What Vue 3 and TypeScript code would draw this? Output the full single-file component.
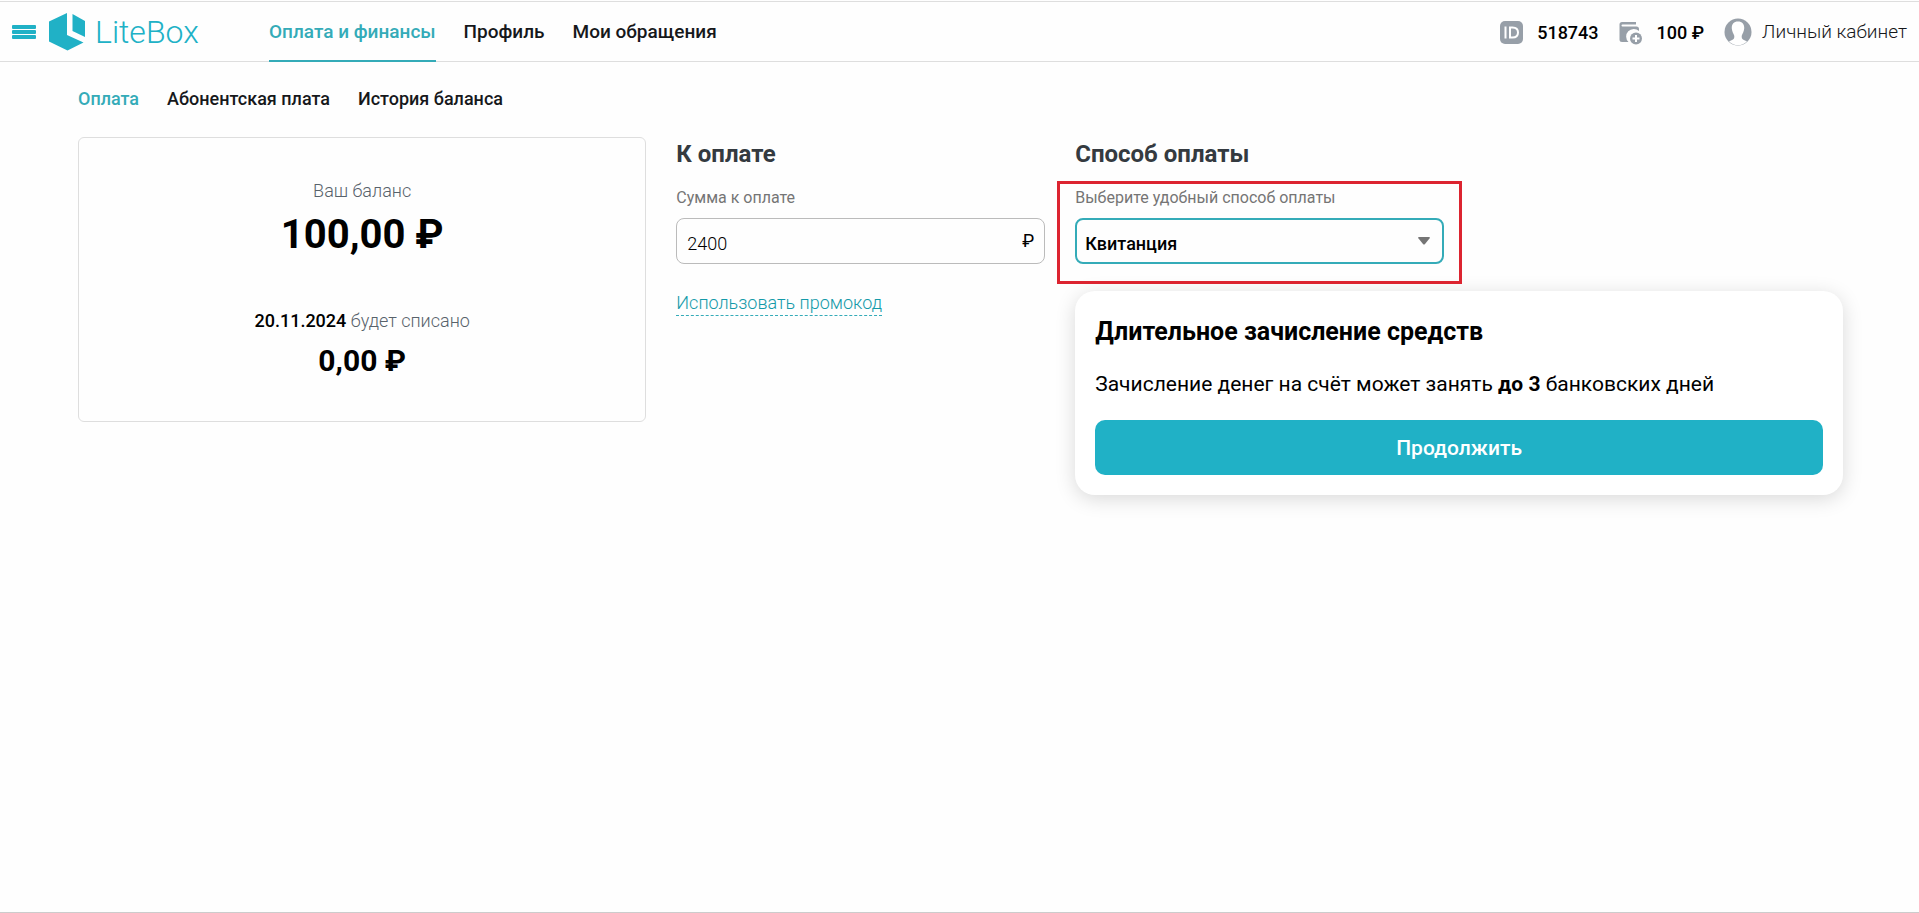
<script setup lang="ts">
import { ref } from 'vue'

interface NavLink {
  label: string
  active: boolean
}

const sections: NavLink[] = [
  { label: 'Оплата и финансы', active: true },
  { label: 'Профиль', active: false },
  { label: 'Мои обращения', active: false },
]

const tabs: NavLink[] = [
  { label: 'Оплата', active: true },
  { label: 'Абонентская плата', active: false },
  { label: 'История баланса', active: false },
]

const amount = ref('2400')
const method = ref('Квитанция')
</script>

<template>
  <div class="page">
    <header class="header">
      <button class="burger" type="button" aria-label="Меню">
        <svg width="24" height="14" viewBox="0 0 24 14" fill="currentColor">
          <rect width="24" height="4" rx="1" />
          <rect y="5" width="24" height="4" rx="1" />
          <rect y="10" width="24" height="4" rx="1" />
        </svg>
      </button>
      <a class="logo" href="#">
        <svg width="36" height="38" viewBox="0 0 36 38" fill="currentColor">
          <path d="M0 8.500L18 0V22L34.500 29.500L18.500 37.500L0 28.500Z" />
          <path d="M23.500 1L36 8V24L23.500 18Z" />
        </svg>
        <span class="logo-name">LiteBox</span>
      </a>
      <nav class="sections">
        <a
          v-for="item in sections"
          :key="item.label"
          href="#"
          class="section"
          :class="{ active: item.active }"
        >{{ item.label }}</a>
      </nav>
      <div class="account">
        <svg class="account-icon" width="23" height="23" viewBox="0 0 23 23">
          <rect width="23" height="23" rx="5" fill="#979fa8" />
          <path d="M5.500 5.500V17.500M10 6.500V16.500H12.500C16 16.500 18 15 18 11.500S16 6.500 12.500 6.500Z" fill="none" stroke="#fff" stroke-width="2" />
        </svg>
        <span class="account-value">518743</span>
        <svg class="account-icon" width="24" height="24" viewBox="0 0 24 24">
          <path d="M3 1H17V3.500H3.500A1 1 0 0 0 3.500 5.500H17.500A2.500 2.500 0 0 1 20 8V10A7 7 0 0 0 9.500 21H3A2.500 2.500 0 0 1 0.500 18.500V3.500A2.500 2.500 0 0 1 3 1Z" fill="#979fa8" />
          <circle cx="17" cy="17.500" r="6" fill="#979fa8" />
          <path d="M17 14V21M13.500 17.500H20.500" stroke="#fff" stroke-width="2" />
        </svg>
        <span class="account-value">100 ₽</span>
        <a class="cabinet" href="#">
          <svg width="28" height="28" viewBox="0 0 28 28">
            <circle cx="14" cy="14" r="13.500" fill="#979fa8" />
            <path d="M14 3.500C18.500 3.500 20.500 6.500 20.200 10.500C20 13.500 18.500 15.500 17.800 17.500C17.400 20 18 21.500 21 22.500L23 23.500A12.800 12.800 0 0 1 5 23.500L7 22.500C10 21.500 10.600 20 10.200 17.500C9.500 15.500 8 13.500 7.800 10.500C7.500 6.500 9.500 3.500 14 3.500Z" fill="#fff" />
          </svg>
          <span>Личный кабинет</span>
        </a>
      </div>
    </header>

    <main class="content">
      <nav class="tabs">
        <a
          v-for="tab in tabs"
          :key="tab.label"
          href="#"
          class="tab"
          :class="{ active: tab.active }"
        >{{ tab.label }}</a>
      </nav>

      <div class="columns">
        <section class="balance">
          <p class="balance-label">Ваш баланс</p>
          <p class="balance-total">100,00 ₽</p>
          <p class="balance-label"><b>20.11.2024</b> будет списано</p>
          <p class="balance-charge">0,00 ₽</p>
        </section>

        <div class="payment">
          <section class="amount">
            <h2 class="title">К оплате</h2>
            <label class="label" for="amount">Сумма к оплате</label>
            <div class="field">
              <input id="amount" v-model="amount" type="text" class="input" />
              <span class="currency">₽</span>
            </div>
            <button type="button" class="promo">Использовать промокод</button>
          </section>

          <section class="method">
            <h2 class="title">Способ оплаты</h2>
            <div class="method-choice">
              <label class="label" for="method">Выберите удобный способ оплаты</label>
              <div class="field focused">
                <select id="method" v-model="method" class="select">
                  <option>Квитанция</option>
                </select>
                <svg class="arrow" width="12" height="8" viewBox="0 0 12 8">
                  <path d="M1 0H11Q12.500 0 11.500 1.500L7 7Q6 8 5 7L0.500 1.500Q-0.500 0 1 0Z" fill="#757575" />
                </svg>
              </div>
              <div class="highlight"></div>
            </div>
            <div class="notice">
              <h3 class="notice-title">Длительное зачисление средств</h3>
              <p class="notice-text">Зачисление денег на счёт может занять <b>до 3</b> банковских дней</p>
              <button type="button" class="submit">Продолжить</button>
            </div>
          </section>
        </div>
      </div>
    </main>
  </div>
</template>

<style>
body {
  margin: 0;
  background: #fefefe;
}
</style>

<style scoped>
.page {
  box-sizing: border-box;
  min-height: 100vh;
  padding-top: 1px;
  border-bottom: 1px solid #ccc;
  font-family: Roboto, "Liberation Sans", sans-serif;
  font-size: 18px;
  line-height: 24px;
  color: #000;
}

.page * {
  box-sizing: border-box;
}

p,
h2,
h3 {
  margin: 0;
}

a {
  text-decoration: none;
}

button,
input,
select {
  font-family: inherit;
}

.header {
  display: flex;
  align-items: center;
  height: 61px;
  padding: 0 12px;
  border-top: 1px solid #dedede;
  border-bottom: 1px solid #dedede;
  font-size: 19px;
}

.burger {
  display: flex;
  padding: 0;
  border: 0;
  background: none;
  color: #20b1c6;
}

.logo {
  display: flex;
  align-items: center;
  gap: 10px;
  width: 220px;
  margin-left: 13px;
  color: #20b1c6;
}

.logo-name {
  font-size: 32px;
  line-height: 36px;
  font-weight: 300;
}

.sections {
  display: flex;
  align-self: stretch;
  gap: 28px;
}

.section {
  height: 60px;
  padding-top: 18px;
  font-weight: 500;
  color: #16181b;
}

.section.active {
  border-bottom: 2px solid #34abb8;
  color: #34abb8;
}

.account {
  display: flex;
  align-items: center;
  margin-left: auto;
}

.account-icon {
  margin-top: 2px;
}

.account-value {
  margin: 2px 20px 0 14px;
  font-size: 18px;
  font-weight: 500;
}

.cabinet {
  display: flex;
  align-items: center;
  gap: 10px;
  font-weight: 300;
  color: #16181b;
}

.content {
  padding: 25px 76px 0 78px;
}

.tabs {
  display: flex;
  gap: 28px;
}

.tab {
  font-weight: 500;
  color: #16181b;
}

.tab.active {
  color: #34abb8;
}

.columns {
  display: grid;
  grid-template-columns: repeat(3, minmax(0, 1fr));
  gap: 30px;
  align-items: start;
  margin-top: 26px;
}

.balance {
  padding: 41px 20px 42px;
  border: 1px solid #dedede;
  border-radius: 6px;
  text-align: center;
}

.balance-label {
  font-weight: 300;
  color: #58626b;
}

.balance-label b {
  font-weight: 500;
  color: #000;
}

.balance-total {
  margin: 8px 0 50px;
  font-size: 40px;
  line-height: 48px;
  font-weight: 700;
}

.balance-charge {
  margin-top: 10px;
  font-size: 30px;
  line-height: 36px;
  font-weight: 700;
}

.payment {
  grid-column: span 2;
  display: grid;
  grid-template-columns: repeat(3, minmax(0, 1fr));
  column-gap: 30px;
}

.method {
  grid-column: span 2;
}

.title {
  font-size: 24px;
  line-height: 34px;
  font-weight: 700;
  color: #343a40;
}

.label {
  display: block;
  padding-top: 15px;
  font-size: 16px;
  color: #757575;
}

.field {
  display: flex;
  align-items: center;
  height: 46px;
  margin-top: 8px;
  padding: 0 10px;
  border: 1px solid #bbb;
  border-radius: 8px;
}

.field.focused {
  position: relative;
  padding: 0;
  border: 2px solid #34abb8;
}

.input,
.select {
  flex: 1;
  min-width: 0;
  height: 100%;
  border: 0;
  outline: 0;
  background: none;
  font-size: 18px;
  color: #000;
}

.input {
  padding: 4px 0 0;
  font-weight: 300;
}

.select {
  appearance: none;
  padding: 4px 40px 0 8px;
  font-weight: 500;
}

.arrow {
  position: absolute;
  top: 17px;
  right: 12px;
  pointer-events: none;
}

.promo {
  margin-top: 27px;
  padding: 0;
  border: 0;
  border-bottom: 1px dashed #34abb8;
  background: none;
  font-size: 18px;
  line-height: 24px;
  font-weight: 300;
  color: #149aa9;
}

.method-choice {
  position: relative;
  width: calc(50% - 15px);
}

.highlight {
  position: absolute;
  inset: 10px -18px -20px;
  border: 3px solid #dc2430;
  pointer-events: none;
}

.notice {
  padding: 25px 20px 20px;
  margin-top: 27px;
  border-radius: 20px;
  background: #fff;
  box-shadow: 0 4px 20px rgba(0, 0, 0, 0.15);
}

.notice-title {
  font-size: 25px;
  line-height: 32px;
  font-weight: 700;
}

.notice-text {
  margin: 24px 0;
  font-size: 21px;
}

.notice-text b {
  font-weight: 700;
}

.submit {
  display: block;
  width: 100%;
  height: 55px;
  border: 0;
  border-radius: 10px;
  background: #20b1c6;
  font-size: 21px;
  font-weight: 500;
  color: #fff;
}
</style>
